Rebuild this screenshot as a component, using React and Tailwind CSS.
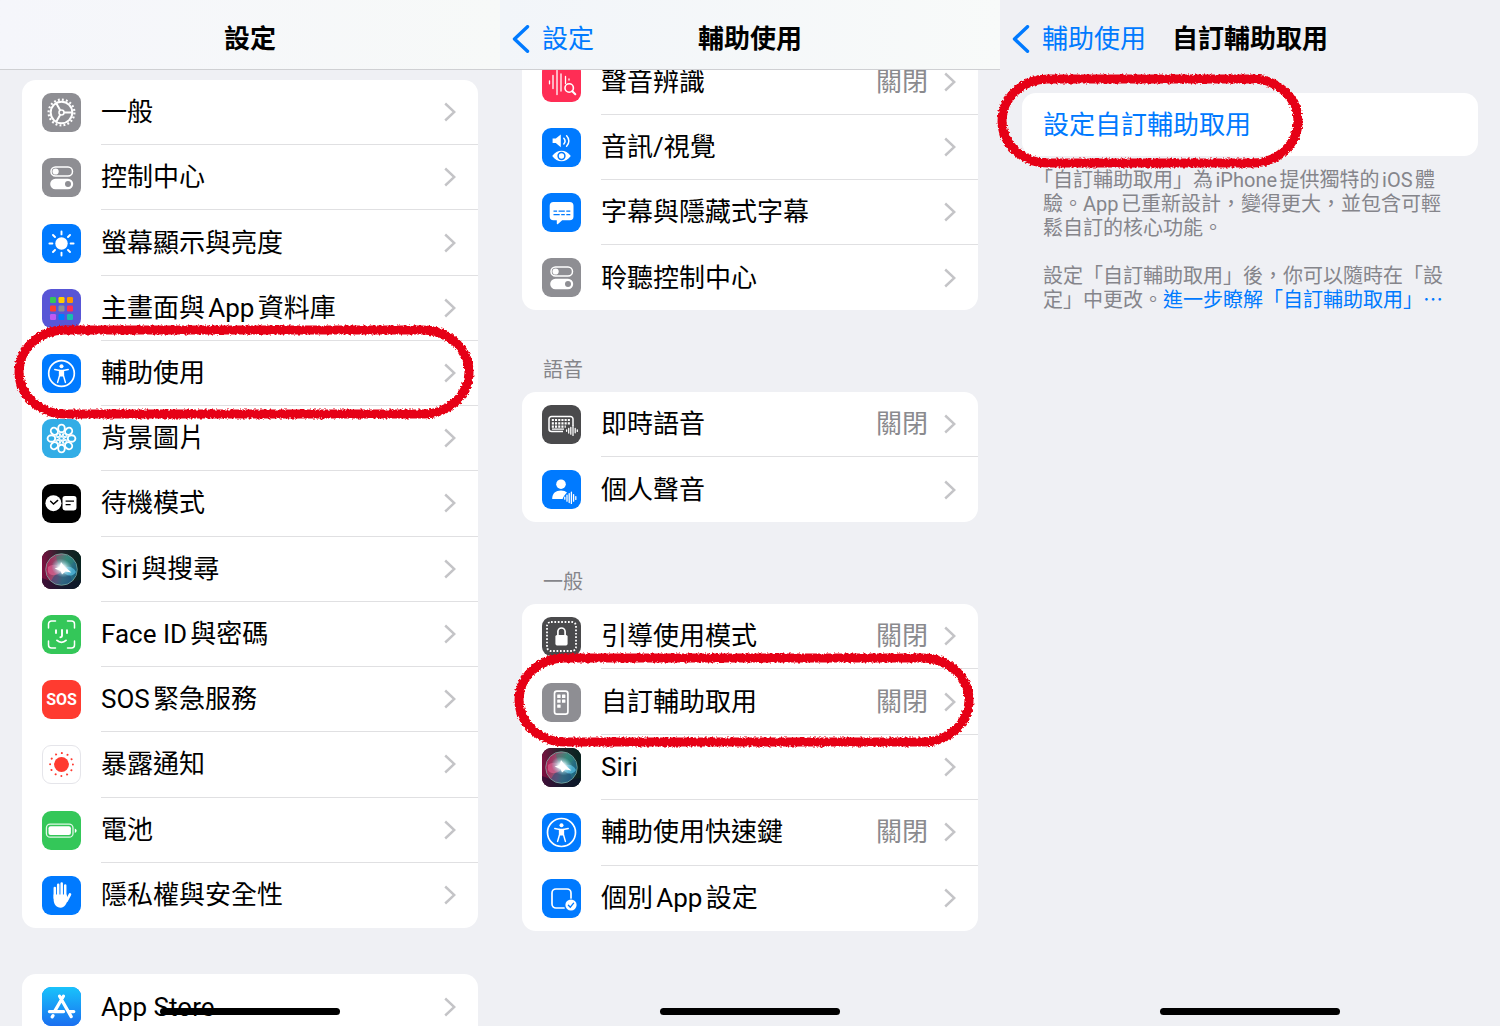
import clsx from 'clsx'

/**
 * Row icons, each drawn on a 39x39 tile
 */
function ToggleGlyph() {
  return (
    <>
      <rect x="9" y="9" width="21.5" height="9" rx="4.5" fill="none" stroke="#fff" strokeWidth="1.5" />
      <circle cx="13.6" cy="13.5" r="3.1" fill="#fff" />
      <rect x="8.2" y="20.8" width="23" height="10.4" rx="5.2" fill="#fff" />
      <circle cx="26" cy="26" r="3" fill="#8e8e93" />
    </>
  )
}

function PersonCircle({ r = 12.8 }) {
  return (
    <>
      <circle cx="19.5" cy="19.5" r={r} fill="none" stroke="#fff" strokeWidth="1.7" />
      <circle cx="19.5" cy="12.2" r="2" fill="#fff" />
      <path
        d="M12.8 15.6l4.8.8v5l-2 7M26.2 15.6l-4.8.8v5l2 7"
        fill="none"
        stroke="#fff"
        strokeWidth="1.5"
        strokeLinecap="round"
        strokeLinejoin="round"
      />
      <path d="M17.2 15.8h4.6v5.4l-.8 1.2h-3l-.8-1.2z" fill="#fff" />
    </>
  )
}

function SiriGlyph() {
  return (
    <>
      <defs>
        <linearGradient id="siriBase" x1="0" y1="0.2" x2="1" y2="0.1">
          <stop offset="0" stopColor="#7a1040" />
          <stop offset="0.45" stopColor="#26252c" />
          <stop offset="1" stopColor="#06231f" />
        </linearGradient>
        <radialGradient id="siriGlow">
          <stop offset="0" stopColor="#fff" />
          <stop offset="0.3" stopColor="#f2fbff" stopOpacity="0.95" />
          <stop offset="0.6" stopColor="#bfe9f2" stopOpacity="0.5" />
          <stop offset="1" stopColor="#8fdcf2" stopOpacity="0" />
        </radialGradient>
        <linearGradient id="siriOrb" x1="0" y1="0.4" x2="1" y2="0.6">
          <stop offset="0" stopColor="#c3205c" />
          <stop offset="0.4" stopColor="#9a7088" />
          <stop offset="0.6" stopColor="#4a9f98" />
          <stop offset="1" stopColor="#1a6f98" />
        </linearGradient>
      </defs>
      <rect width="39" height="39" fill="url(#siriBase)" />
      <path d="M0 39V28l14 5 25-3v9z" fill="#0b1030" fillOpacity="0.55" />
      <circle cx="19.5" cy="19.5" r="15.5" fill="url(#siriOrb)" fillOpacity="0.8" />
      <path d="M14 6.500a15 15 0 0 1 18 5c-4 4-7 5-11 6-4-2-6-5-7-11z" fill="#2b8a72" fillOpacity="0.45" />
      <path d="M9 31c3-6 7-9 12-10 5 1 8 4 9 10a16 16 0 0 1-21 0z" fill="#20457c" fillOpacity="0.5" />
      <path d="M6 17c6-5 12-1 15 3-5 6-12 7-15 2z" fill="#ef6a9b" fillOpacity="0.55" />
      <path d="M34 22c-4-7-10-6-14-2 3 6 10 8 14 2z" fill="#5cc9f0" fillOpacity="0.65" />
      <circle cx="19.5" cy="19.5" r="15.8" fill="none" stroke="#8fc7bb" strokeOpacity="0.65" strokeWidth="1" />
      <ellipse cx="20" cy="18" rx="11" ry="9" fill="url(#siriGlow)" transform="rotate(25 20 18)" />
      <path d="M19 12l3.4 4.400 7 6.200-6-1.200-3.400 3-1.400-3.400-6-2.600 5-1.400z" fill="#fff" />
    </>
  )
}

function VoiceBars() {
  return (
    <path
      d="M22.8 27.2v2M25 25.2v6M27.2 23.6v9M29.4 22.2v11.2M31.6 24.6v6.6M33.8 26.6v2.8"
      fill="none"
      stroke="#fff"
      strokeWidth="1.3"
      strokeLinecap="round"
    />
  )
}

const petals = [0, 45, 90, 135, 180, 225, 270, 315]

const glyphs = {
  general: (
    <>
      <circle cx="19.5" cy="19.5" r="10.8" fill="none" stroke="#fff" strokeWidth="2" />
      <circle cx="19.5" cy="19.5" r="12.9" fill="none" stroke="#fff" strokeWidth="2.2" strokeDasharray="1.9 2.153" />
      <circle cx="19.5" cy="19.5" r="2.5" fill="none" stroke="#fff" strokeWidth="1.6" />
      <path d="M22 19.5h8.3M18.2 17.3l-4.1-7.2M18.2 21.7l-4.1 7.2" stroke="#fff" strokeWidth="2" />
    </>
  ),
  toggles: <ToggleGlyph />,
  display: (
    <>
      <circle cx="19.5" cy="19.5" r="6.2" fill="#fff" />
      <path
        d="M19.5 7.4v3M19.5 28.6v3M7.4 19.5h3M28.6 19.5h3M11 11l2 2M26 26l2 2M28 11l-2 2M13 26l-2 2"
        stroke="#fff"
        strokeWidth="1.9"
        strokeLinecap="round"
      />
    </>
  ),
  home: (
    <>
      <rect x="8" y="8" width="6" height="6" rx="1.2" fill="#34c759" />
      <rect x="16.5" y="8" width="6" height="6" rx="1.2" fill="#ffcc00" />
      <rect x="25" y="8" width="6" height="6" rx="1.2" fill="#ff9500" />
      <rect x="8" y="16.5" width="6" height="6" rx="1.2" fill="#ff3b30" />
      <rect x="16.5" y="16.5" width="6" height="6" rx="1.2" fill="#8e8e93" />
      <rect x="25" y="16.5" width="6" height="6" rx="1.2" fill="#ff2d55" />
      <rect x="8" y="25" width="6" height="6" rx="1.2" fill="#bf5af2" />
      <rect x="16.5" y="25" width="6" height="6" rx="1.2" fill="#007aff" />
      <rect x="25" y="25" width="6" height="6" rx="1.2" fill="#16bfae" />
    </>
  ),
  accessibility: <PersonCircle />,
  shortcut: <PersonCircle r={14} />,
  wallpaper: (
    <g fill="none" stroke="#fff" strokeWidth="1.9">
      {petals.map((deg) => (
        <g key={deg} transform={`rotate(${deg} 19.5 19.5)`}>
          <ellipse cx="19.5" cy="9.4" rx="3.3" ry="3.8" />
          <path d="M19.5 18.2l-2-4.8M19.5 18.2l2-4.8" strokeWidth="1.1" />
        </g>
      ))}
    </g>
  ),
  standby: (
    <>
      <circle cx="11.4" cy="19.2" r="8" fill="#fff" />
      <path d="M8.6 17.2l2.9 2.8 4.2-3.6" fill="none" stroke="#000" strokeWidth="1.4" strokeLinecap="round" />
      <rect x="20.5" y="12" width="14" height="14.4" rx="2.6" fill="#fff" />
      <path d="M23.6 17.2h8.4M23.6 20.6h5" stroke="#000" strokeWidth="1.3" />
    </>
  ),
  siri: <SiriGlyph />,
  faceid: (
    <g fill="none" stroke="#fff" strokeLinecap="round">
      <path
        d="M6.5 13V9a3 3 0 0 1 3-3h4M25.5 6h4a3 3 0 0 1 3 3v4M32.5 26v4a3 3 0 0 1-3 3h-4M13.5 33h-4a3 3 0 0 1-3-3v-4"
        strokeWidth="1.5"
      />
      <path d="M14 15.2v2.8M25 15.2v2.8M20 15v6c0 .8-.6 1.2-1.6 1.2M15 25.4c2.6 2.4 6.4 2.4 9 0" strokeWidth="1.9" />
    </g>
  ),
  exposure: (
    <>
      <circle cx="19.5" cy="19.5" r="7.4" fill="#ff3b30" />
      <circle
        cx="19.5"
        cy="19.5"
        r="11.4"
        fill="none"
        stroke="#ff3b30"
        strokeWidth="2"
        strokeLinecap="round"
        strokeDasharray="0.01 5.96"
      />
    </>
  ),
  battery: (
    <>
      <rect x="4.4" y="13.2" width="26.6" height="13" rx="3.8" fill="none" stroke="#fff" strokeOpacity="0.85" strokeWidth="1.3" />
      <rect x="6.5" y="15.3" width="22.4" height="8.8" rx="2" fill="#fff" />
      <path d="M32.8 17.5c2.4.8 2.4 3.6 0 4.4z" fill="#fff" />
    </>
  ),
  privacy: (
    <g fill="none" stroke="#fff" strokeLinecap="round" strokeLinejoin="round">
      <path d="M12.8 12v10M16.2 8.8v12M19.7 7.6v12M23.2 9.6v12" strokeWidth="2.5" />
      <path d="M28 18.4l-3.4 6.6" strokeWidth="2.6" />
      <path d="M11.6 18.4h12.9l1.4 4.4c-1.4 5.4-3.4 9-7.2 9-4.6 0-7.1-3.6-7.1-9z" fill="#fff" stroke="none" />
    </g>
  ),
  appstore: (
    <>
      <defs>
        <linearGradient id="storeBlue" x1="0" y1="0" x2="0" y2="1">
          <stop offset="0" stopColor="#19c3fb" />
          <stop offset="1" stopColor="#1a6ff0" />
        </linearGradient>
      </defs>
      <rect width="39" height="39" fill="url(#storeBlue)" />
      <path
        d="M21.4 9.2l-8.8 15.2M17.6 9.2l11.6 20.4M7.4 24.6h14.2M27.2 24.6h4.6M11 28.6l-.8 1.3"
        fill="none"
        stroke="#fff"
        strokeWidth="3.2"
        strokeLinecap="round"
      />
    </>
  ),
  sound: (
    <g fill="none" stroke="#fff" strokeLinecap="round">
      <path d="M7.5 17.8v3M11 12.5v13M15 7.5v24M19 11v17M23.5 13.5v7M27 16v1" strokeWidth="1.3" />
      <circle cx="27.2" cy="25" r="4.2" strokeWidth="1.6" />
      <path d="M30.3 28.2l3 3" strokeWidth="2" />
    </g>
  ),
  audiovisual: (
    <>
      <path d="M10.6 10.5h3.2l5-4v12.8l-5-4.2h-3.2z" fill="#fff" />
      <path d="M21.8 10.2c1.6 1.8 1.6 4 0 5.8M24.6 7.8c3 3 3 7.4 0 10.4" fill="none" stroke="#fff" strokeWidth="1.5" strokeLinecap="round" />
      <path d="M10.2 28c5-7 13.6-7 18.6 0-5 7-13.6 7-18.6 0z" fill="#fff" />
      <circle cx="19.5" cy="28" r="3.4" fill="none" stroke="#007aff" strokeWidth="1.5" />
    </>
  ),
  captions: (
    <>
      <path
        d="M11.5 9h16.2a3.8 3.8 0 0 1 3.8 3.8v10.6a3.8 3.8 0 0 1-3.8 3.8h-7.5l-4.2 3.8c-.7.6-1.2.3-1.2-.5v-3.3h-3.3a3.8 3.8 0 0 1-3.8-3.8V12.8A3.8 3.8 0 0 1 11.5 9z"
        fill="#fff"
      />
      <path d="M11.5 18.2h3.6M16.6 18.2h6.2M24.3 18.2h4M11.5 21.6h6.2M19.2 21.6h3.6M24.3 21.6h4" stroke="#007aff" strokeWidth="1.3" />
    </>
  ),
  livespeech: (
    <>
      <path d="M21 26.5H9.5A2.5 2.5 0 0 1 7 24V14a2.5 2.5 0 0 1 2.5-2.5h19A2.5 2.5 0 0 1 31 14v7" fill="none" stroke="#fff" strokeWidth="1.5" />
      <path d="M9.8 15h18.4M9.8 18.4h18.4M9.8 21.6h14" fill="none" stroke="#fff" strokeWidth="2.1" strokeDasharray="2.1 1.1" />
      <path d="M10 24.2h12" stroke="#fff" strokeWidth="1.2" />
      <path
        d="M24.6 24.8v1.5M26.7 23.4v4.6M28.8 22.4v6.8M31 21v9.4M33.2 23.4v4.4M35.3 24.8v1.6"
        fill="none"
        stroke="#fff"
        strokeWidth="1.3"
        strokeLinecap="round"
      />
    </>
  ),
  personalvoice: (
    <>
      <circle cx="19" cy="14.2" r="4.8" fill="#fff" />
      <path d="M10.2 29c0-5.6 3.6-8.4 8.8-8.4 2.6 0 4.6.7 6 2-2 2-3.4 3.6-4.4 6.4z" fill="#fff" />
      <VoiceBars />
    </>
  ),
  guided: (
    <>
      <rect x="5" y="5" width="29" height="29" rx="4" fill="none" stroke="#fff" strokeWidth="1.8" strokeDasharray="1.7 1.7" />
      <rect x="13.4" y="18" width="12.2" height="10.4" rx="1.6" fill="#fff" />
      <path d="M15.9 18v-3.4a3.6 3.6 0 0 1 7.2 0V18" fill="none" stroke="#fff" strokeWidth="1.7" />
    </>
  ),
  assistive: (
    <>
      <rect x="12.5" y="8.2" width="13.4" height="23" rx="2.4" fill="none" stroke="#fff" strokeWidth="1.7" />
      <g fill="#fff">
        <rect x="15.2" y="11.6" width="3.4" height="3.4" rx="0.5" />
        <rect x="20" y="11.6" width="3.4" height="3.4" rx="0.5" />
        <rect x="15.2" y="16.4" width="3.4" height="3.4" rx="0.5" />
        <rect x="20" y="16.4" width="3.4" height="3.4" rx="0.5" />
        <rect x="15.2" y="21.4" width="3.4" height="3.4" rx="0.5" />
      </g>
    </>
  ),
  perapp: (
    <>
      <path d="M22 29h-8a4 4 0 0 1-4-4V14a4 4 0 0 1 4-4h11a4 4 0 0 1 4 4v5" fill="none" stroke="#fff" strokeWidth="1.7" strokeLinecap="round" />
      <circle cx="29" cy="26" r="5.6" fill="#fff" />
      <path d="M26.4 26.2l1.9 2 3.3-4" fill="none" stroke="#007aff" strokeWidth="1.3" strokeLinecap="round" />
    </>
  ),
}

const settingsRows = [
  { icon: 'general', tile: 'bg-[#8e8e93]', label: '一般' },
  { icon: 'toggles', tile: 'bg-[#8e8e93]', label: '控制中心' },
  { icon: 'display', tile: 'bg-[#007aff]', label: '螢幕顯示與亮度' },
  { icon: 'home', tile: 'bg-[#5856d6]', label: '主畫面與App資料庫' },
  { icon: 'accessibility', tile: 'bg-[#007aff]', label: '輔助使用', ringed: true },
  { icon: 'wallpaper', tile: 'bg-[#32ade6]', label: '背景圖片' },
  { icon: 'standby', tile: 'bg-black', label: '待機模式' },
  { icon: 'siri', tile: 'bg-black', label: 'Siri與搜尋' },
  { icon: 'faceid', tile: 'bg-[#34c759]', label: 'Face ID與密碼' },
  { icon: 'sos', tile: 'bg-[#ff3b30]', label: 'SOS緊急服務' },
  { icon: 'exposure', tile: 'bg-white border border-[#e5e5ea]', label: '暴露通知' },
  { icon: 'battery', tile: 'bg-[#34c759]', label: '電池' },
  { icon: 'privacy', tile: 'bg-[#007aff]', label: '隱私權與安全性' },
]

const storeRows = [{ icon: 'appstore', tile: 'bg-[#007aff]', label: 'App Store' }]

const hearingRows = [
  { icon: 'sound', tile: 'bg-[#ff2d55]', label: '聲音辨識', value: '關閉' },
  { icon: 'audiovisual', tile: 'bg-[#007aff]', label: '音訊/視覺' },
  { icon: 'captions', tile: 'bg-[#007aff]', label: '字幕與隱藏式字幕' },
  { icon: 'toggles', tile: 'bg-[#8e8e93]', label: '聆聽控制中心' },
]

const speechRows = [
  { icon: 'livespeech', tile: 'bg-[#4a4a4c]', label: '即時語音', value: '關閉' },
  { icon: 'personalvoice', tile: 'bg-[#007aff]', label: '個人聲音' },
]

const generalRows = [
  { icon: 'guided', tile: 'bg-[#4a4a4c]', label: '引導使用模式', value: '關閉' },
  { icon: 'assistive', tile: 'bg-[#8e8e93]', label: '自訂輔助取用', value: '關閉', ringed: true },
  { icon: 'siri', tile: 'bg-black', label: 'Siri' },
  { icon: 'shortcut', tile: 'bg-[#007aff]', label: '輔助使用快速鍵', value: '關閉' },
  { icon: 'perapp', tile: 'bg-[#007aff]', label: '個別App設定' },
]

function Tile({ icon, tile }) {
  return (
    <span className={clsx('flex size-[39px] shrink-0 items-center justify-center overflow-hidden rounded-[9px]', tile)}>
      {icon === 'sos' ? (
        <span className="text-[16px] font-bold text-white">SOS</span>
      ) : (
        <svg className="size-[39px] shrink-0" viewBox="0 0 39 39" aria-hidden="true">
          {glyphs[icon]}
        </svg>
      )}
    </span>
  )
}

/* Crayon outline drawn around the item to tap */
function Ring({ width, className }) {
  return (
    <svg
      className={clsx('pointer-events-none absolute z-10 overflow-visible', className)}
      viewBox={`0 0 ${width} 94`}
      preserveAspectRatio="none"
      aria-hidden="true"
    >
      <defs>
        <filter id="crayon" x="-5%" y="-10%" width="110%" height="120%">
          <feTurbulence type="fractalNoise" baseFrequency="0.45" numOctaves="2" seed="4" result="noise" />
          <feDisplacementMap in="SourceGraphic" in2="noise" scale="4" xChannelSelector="R" yChannelSelector="G" />
        </filter>
      </defs>
      <rect
        x="5"
        y="5"
        width={width - 10}
        height="84"
        rx="46"
        ry="42"
        fill="none"
        stroke="#e60012"
        strokeWidth="9"
        filter="url(#crayon)"
      />
    </svg>
  )
}

function Row({ icon, tile, label, value, ringed }) {
  return (
    <li className="group relative min-h-[65px]">
      <a href="#" className="flex h-full items-center gap-5 pl-5">
        <Tile icon={icon} tile={tile} />
        <span className="flex flex-1 items-center self-stretch border-b border-[#e0e0e2] pr-[22px] group-last:border-b-0">
          <span className="flex-1 text-[26px] text-black">{label}</span>
          {value && <span className="mr-4 text-[26px] text-[#8a8a8e]">{value}</span>}
          <svg className="h-5 w-3" viewBox="0 0 12 20" fill="none" stroke="#c4c4c7" strokeWidth="2.4" aria-hidden="true">
            <path d="M1.2 1.5L10.3 10l-9.1 8.5" />
          </svg>
        </span>
      </a>
      {ringed && <Ring width={460} className="-top-4 -left-2 h-[94px] w-[calc(100%+4px)]" />}
    </li>
  )
}

function List({ rows, className }) {
  return (
    <ul className={clsx('mx-[22px] grid auto-rows-fr rounded-[14px] bg-white', className)}>
      {rows.map((row) => (
        <Row key={row.label} {...row} />
      ))}
    </ul>
  )
}

function NavBar({ title, back, className }) {
  return (
    <header className={clsx('grid h-[70px] shrink-0 grid-cols-[1fr_auto_1fr] items-center border-b px-3 pt-2', className)}>
      {back ? (
        <a href="#" className="flex items-center gap-3 text-[26px] text-[#007aff]">
          <svg className="h-7 w-[18px]" viewBox="0 0 18 28" fill="none" stroke="currentColor" strokeWidth="3.4" aria-hidden="true">
            <path d="M15.5 1.7L2.5 14l13 12.3" strokeLinecap="round" strokeLinejoin="round" />
          </svg>
          {back}
        </a>
      ) : (
        <span />
      )}
      <h1 className="text-[26px] font-semibold text-black">{title}</h1>
      <span />
    </header>
  )
}

function Screen({ children }) {
  return (
    <section className="relative flex h-full min-h-0 min-w-0 flex-col bg-[#eff0f4]">
      {children}
      <span className="absolute bottom-[11px] left-1/2 h-[7px] w-[180px] -translate-x-1/2 rounded-full bg-black" />
    </section>
  )
}

function SectionTitle({ children }) {
  return <h2 className="mx-[43px] mt-12 mb-[10px] text-[20px] leading-6 text-[#85858a]">{children}</h2>
}

export default function App() {
  return (
    <main
      lang="zh-Hant-TW"
      className="grid h-screen grid-cols-3 overflow-hidden bg-[#eff0f4] font-['Roboto','Noto_Sans_CJK_TC',sans-serif] leading-8 [text-autospace:normal]"
    >
      {/* Settings */}
      <Screen>
        <NavBar title="設定" className="border-[#cfd0d3] bg-linear-to-r from-[#f5f6fb] to-[#f7f9f8]" />
        <div className="min-h-0 flex-1 overflow-hidden pt-[10px]">
          <List rows={settingsRows} className="min-h-[848px]" />
          <List rows={storeRows} className="mt-[46px]" />
        </div>
      </Screen>

      {/* Accessibility */}
      <Screen>
        <NavBar title="輔助使用" back="設定" className="border-[#cfd0d3] bg-linear-to-r from-[#f2f5f9] to-[#f8faf9]" />
        <div className="min-h-0 flex-1 overflow-hidden">
          <List rows={hearingRows} className="-mt-5" />
          <SectionTitle>語音</SectionTitle>
          <List rows={speechRows} />
          <SectionTitle>一般</SectionTitle>
          <List rows={generalRows} className="min-h-[327px]" />
        </div>
      </Screen>

      {/* Assistive Access */}
      <Screen>
        <NavBar title="自訂輔助取用" back="輔助使用" className="border-transparent" />
        <div className="relative mx-[22px] mt-[23px]">
          <button type="button" className="h-[63px] w-full rounded-[14px] bg-white px-[21px] text-left text-[26px] text-[#007aff]">
            設定自訂輔助取用
          </button>
          <Ring width={306} className="-top-[19px] -left-[25px] h-[94px] w-[306px]" />
        </div>
        <div className="mx-[43px] mt-3 text-[20px] leading-6 whitespace-nowrap text-[#85858b] [text-spacing-trim:trim-start]">
          <p>
            「自訂輔助取用」為iPhone提供獨特的iOS體
            <br />
            驗。App已重新設計，變得更大，並包含可輕
            <br />
            鬆自訂的核心功能。
          </p>
          <p className="mt-6">
            設定「自訂輔助取用」後，你可以隨時在「設
            <br />
            定」中更改。
            <a href="#" className="text-[#007aff]">
              進一步瞭解「自訂輔助取用」⋯
            </a>
          </p>
        </div>
      </Screen>
    </main>
  )
}
